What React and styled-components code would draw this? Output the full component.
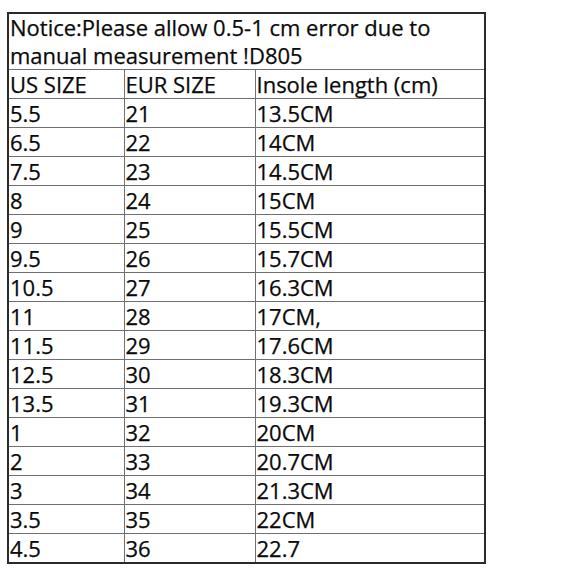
import React from "react";
import styled, { createGlobalStyle } from "styled-components";

const Global = createGlobalStyle`
  html, body { margin: 0; padding: 0; background: #fff; }
  body { font-family: "Open Sans", "Noto Sans", sans-serif; color: #0a0a0a; }
`;

const Page = styled.div`
  padding: 12px 0 0 7px;
`;

const Table = styled.table`
  border-collapse: collapse;
  border: 2px solid #2a2a2a;
  width: 477px;
  table-layout: fixed;
  font-size: 22px;
  -webkit-text-stroke: 0.25px #0a0a0a;
`;

const Cell = styled.td`
  border: 1px solid #707070;
  padding: 0 0 0 1px;
  height: 28px;
  line-height: 28px;
  white-space: nowrap;
  vertical-align: middle;
  overflow: hidden;
`;

const Notice = styled.td`
  border: 1px solid #707070;
  padding: 0 0 0 1px;
  line-height: 27.5px;
`;

const rows = [
  ["5.5", "21", "13.5CM"],
  ["6.5", "22", "14CM"],
  ["7.5", "23", "14.5CM"],
  ["8", "24", "15CM"],
  ["9", "25", "15.5CM"],
  ["9.5", "26", "15.7CM"],
  ["10.5", "27", "16.3CM"],
  ["11", "28", "17CM,"],
  ["11.5", "29", "17.6CM"],
  ["12.5", "30", "18.3CM"],
  ["13.5", "31", "19.3CM"],
  ["1", "32", "20CM"],
  ["2", "33", "20.7CM"],
  ["3", "34", "21.3CM"],
  ["3.5", "35", "22CM"],
  ["4.5", "36", "22.7"],
];

export default function App() {
  return (
    <Page>
      <Global />
      <Table>
        <colgroup>
          <col style={{ width: 116 }} />
          <col style={{ width: 131 }} />
          <col style={{ width: 230 }} />
        </colgroup>
        <tbody>
          <tr>
            <Notice colSpan={3}>
              Notice:Please allow 0.5-1 cm error due to
              <br />
              manual measurement !D805
            </Notice>
          </tr>
          <tr>
            <Cell>US SIZE</Cell>
            <Cell>EUR SIZE</Cell>
            <Cell>Insole length (cm)</Cell>
          </tr>
          {rows.map((r, i) => (
            <tr key={i}>
              <Cell>{r[0]}</Cell>
              <Cell>{r[1]}</Cell>
              <Cell>{r[2]}</Cell>
            </tr>
          ))}
        </tbody>
      </Table>
    </Page>
  );
}
